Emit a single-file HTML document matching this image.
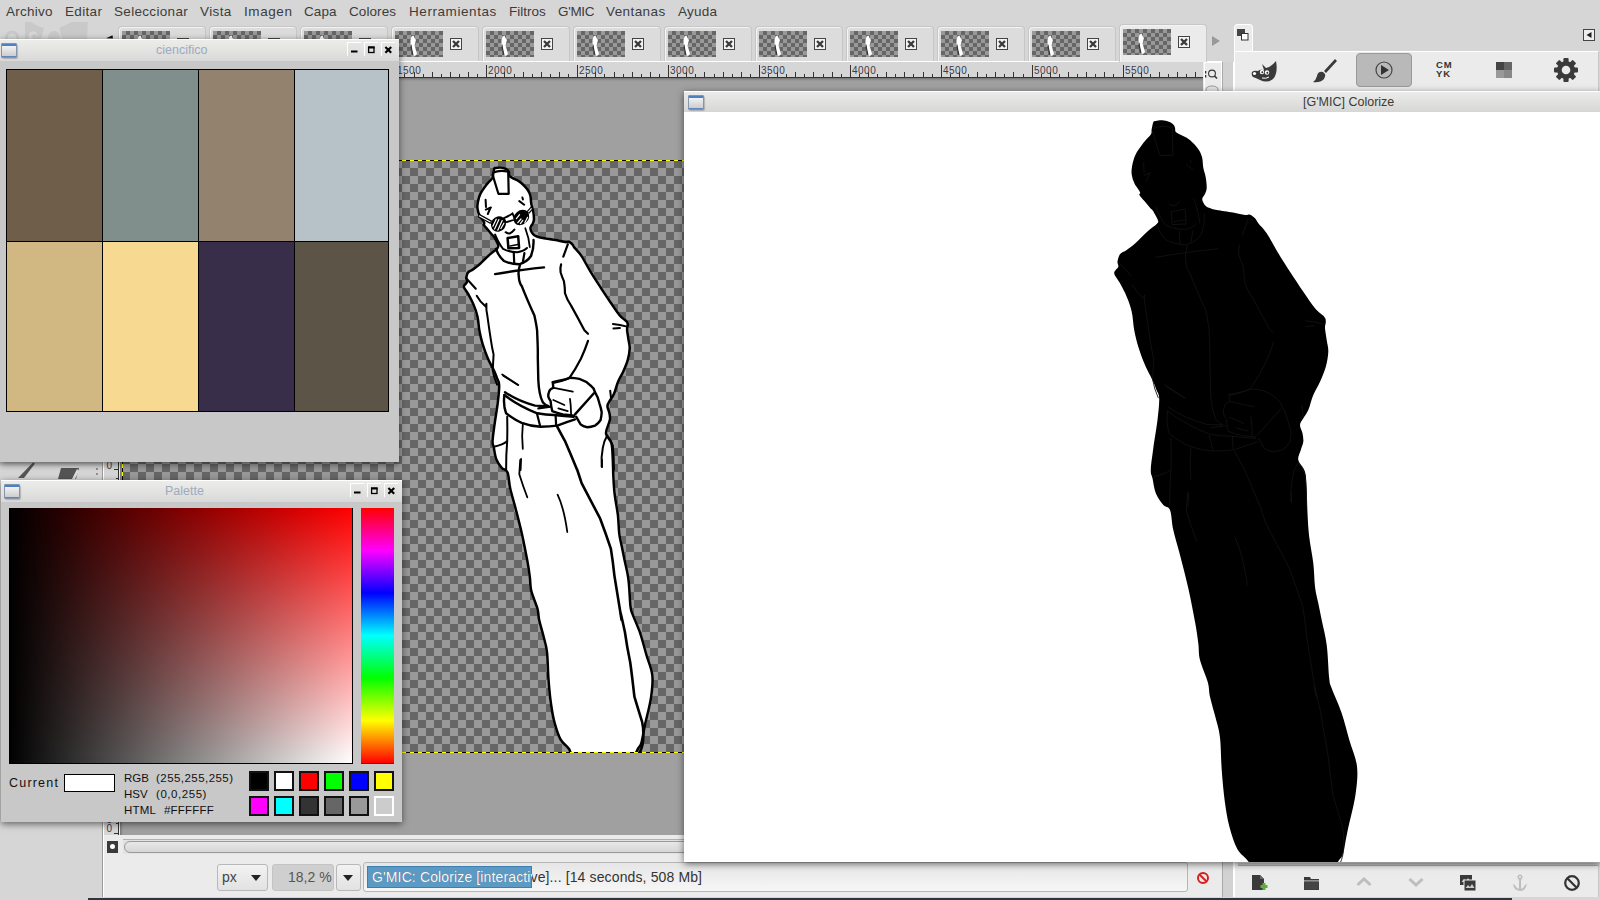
<!DOCTYPE html>
<html><head><meta charset="utf-8">
<style>
*{margin:0;padding:0;box-sizing:border-box}
html,body{width:1600px;height:900px;overflow:hidden;background:#d6d6d6;font-family:"Liberation Sans",sans-serif;position:relative}
.a{position:absolute}
.menu{left:0;top:0;width:1600px;height:23px;background:#d6d6d6}
.menu span{position:absolute;top:4px;font-size:13.5px;color:#3c3c3c}
.tab{position:absolute;width:88px;border:1px solid #c6c6c6;border-bottom:none;border-radius:4px 4px 0 0;box-shadow:inset 1px 1px 0 #f4f4f4}
.tab .th{position:absolute;left:3px;width:48px;height:26px;background:conic-gradient(#666 90deg,#999 90deg 180deg,#666 180deg 270deg,#999 270deg) 0 0/8px 8px}
.tab .th svg{position:absolute;left:0;top:0}
.tab .cx{position:absolute;left:58px;width:12px;height:12px;border:1px solid #444;background:#f4f4f4}
.tab .cx svg{position:absolute;left:0;top:0}
.checker{background:conic-gradient(#666 90deg,#999 90deg 180deg,#666 180deg 270deg,#999 270deg) 0 0/16px 16px}
.win{position:absolute;background:#c8c8c8;box-shadow:0 2px 7px rgba(0,0,0,.55)}
.tbar{position:absolute;left:0;top:0;right:0;height:22px;background:linear-gradient(#ececea,#e4e4e2 45%,#d8d8d8);border-top:1px solid #fff}
.ticon{position:absolute;left:1px;top:3px;width:16px;height:15px;border-radius:2px;background:linear-gradient(#4b7fc6 0,#4b7fc6 3px,#f2f2f2 3px,#cdcdcd 13px,#5f86c0 13px);box-shadow:0 0 0 1px #8394ad inset,1px 1px 1px rgba(0,0,0,.2)}
.ttl{position:absolute;top:3px;font-size:12.5px;color:#9eaac0}
.tbtn{position:absolute;top:2px;width:14px;height:14px;border-left:1px solid #fff;border-top:1px solid #fff;background:linear-gradient(#e6e6e4,#dcdcdc)}
.tbtn svg{position:absolute;left:0;top:0}
.mono{font-family:"Liberation Sans",sans-serif}
</style></head><body>
<!-- menu -->
<div class="a menu">
<span style="left:6px;letter-spacing:0.25px">Archivo</span><span style="left:65px;letter-spacing:0.34px">Editar</span><span style="left:114px;letter-spacing:0.32px">Seleccionar</span><span style="left:200px;letter-spacing:0.38px">Vista</span><span style="left:244px;letter-spacing:0.59px">Imagen</span><span style="left:304px;letter-spacing:0.07px">Capa</span><span style="left:349px;letter-spacing:0.08px">Colores</span><span style="left:409px;letter-spacing:0.57px">Herramientas</span><span style="left:509px;letter-spacing:0px">Filtros</span><span style="left:558px;letter-spacing:-0.35px">G'MIC</span><span style="left:606px;letter-spacing:0.41px">Ventanas</span><span style="left:678px;letter-spacing:0.24px">Ayuda</span>
</div>
<!-- ghost wilber -->
<svg class="a" style="left:0;top:18px" width="100" height="21"><g fill="#c9c9c9"><path d="M25 4L31 4Q36 8 44 9.7L41 21L25 21Z"/><path d="M59.3 9.7Q66 7 72 4L87.8 4L87 21L62 21Z"/><circle cx="12" cy="19.5" r="7"/><circle cx="33" cy="17.6" r="7.2"/><circle cx="54" cy="19" r="6"/></g><g fill="#d7d7d7"><circle cx="12" cy="19.8" r="4.2"/><circle cx="33" cy="17.8" r="4.6"/></g><g fill="#c9c9c9"><circle cx="34.5" cy="18.5" r="2.6"/><circle cx="54.2" cy="19.5" r="3.6"/></g></svg>
<svg class="a" style="left:104px;top:33px" width="12" height="8"><path d="M8.5 2.3L2 5.3L9 5.6Z" fill="#111"/></svg>

<!-- image window frame -->
<div class="a" style="left:102px;top:61px;width:1120px;height:836px;background:#ebebeb;border-left:1px solid #9a9a9a"></div>
<div class="a" style="left:103px;top:61px;width:1px;height:836px;background:#fff"></div>
<div class="a" style="left:102px;top:61px;width:1120px;height:1px;background:#fff"></div>
<!-- tabs -->
<div class="tab" style="left:118px;top:26px;height:35px;background:#dcdcdc"><div class="th" style="top:4px"><svg width="48" height="26"><path d="M16.5 5.5L18.5 4.5L19.5 7L21 9L20.5 13L19.5 14L22 23L20 25L18 24L16.5 16L15.5 12L15.5 9Z" fill="#fff"/><path d="M16.5 13L17 17L18.5 24L17.5 24L15.5 16Z" fill="#111" opacity=".8"/><path d="M20.5 9L21 13L20 14Z" fill="#222" opacity=".6"/></svg></div><div class="cx" style="top:11px"><svg width="10" height="10"><path d="M2 2L8 8M8 2L2 8" stroke="#3a3a3a" stroke-width="2.4"/></svg></div></div>
<div class="tab" style="left:209px;top:26px;height:35px;background:#dcdcdc"><div class="th" style="top:4px"><svg width="48" height="26"><path d="M16.5 5.5L18.5 4.5L19.5 7L21 9L20.5 13L19.5 14L22 23L20 25L18 24L16.5 16L15.5 12L15.5 9Z" fill="#fff"/><path d="M16.5 13L17 17L18.5 24L17.5 24L15.5 16Z" fill="#111" opacity=".8"/><path d="M20.5 9L21 13L20 14Z" fill="#222" opacity=".6"/></svg></div><div class="cx" style="top:11px"><svg width="10" height="10"><path d="M2 2L8 8M8 2L2 8" stroke="#3a3a3a" stroke-width="2.4"/></svg></div></div>
<div class="tab" style="left:300px;top:26px;height:35px;background:#dcdcdc"><div class="th" style="top:4px"><svg width="48" height="26"><path d="M16.5 5.5L18.5 4.5L19.5 7L21 9L20.5 13L19.5 14L22 23L20 25L18 24L16.5 16L15.5 12L15.5 9Z" fill="#fff"/><path d="M16.5 13L17 17L18.5 24L17.5 24L15.5 16Z" fill="#111" opacity=".8"/><path d="M20.5 9L21 13L20 14Z" fill="#222" opacity=".6"/></svg></div><div class="cx" style="top:11px"><svg width="10" height="10"><path d="M2 2L8 8M8 2L2 8" stroke="#3a3a3a" stroke-width="2.4"/></svg></div></div>
<div class="tab" style="left:391px;top:26px;height:35px;background:#dcdcdc"><div class="th" style="top:4px"><svg width="48" height="26"><path d="M16.5 5.5L18.5 4.5L19.5 7L21 9L20.5 13L19.5 14L22 23L20 25L18 24L16.5 16L15.5 12L15.5 9Z" fill="#fff"/><path d="M16.5 13L17 17L18.5 24L17.5 24L15.5 16Z" fill="#111" opacity=".8"/><path d="M20.5 9L21 13L20 14Z" fill="#222" opacity=".6"/></svg></div><div class="cx" style="top:11px"><svg width="10" height="10"><path d="M2 2L8 8M8 2L2 8" stroke="#3a3a3a" stroke-width="2.4"/></svg></div></div>
<div class="tab" style="left:482px;top:26px;height:35px;background:#dcdcdc"><div class="th" style="top:4px"><svg width="48" height="26"><path d="M16.5 5.5L18.5 4.5L19.5 7L21 9L20.5 13L19.5 14L22 23L20 25L18 24L16.5 16L15.5 12L15.5 9Z" fill="#fff"/><path d="M16.5 13L17 17L18.5 24L17.5 24L15.5 16Z" fill="#111" opacity=".8"/><path d="M20.5 9L21 13L20 14Z" fill="#222" opacity=".6"/></svg></div><div class="cx" style="top:11px"><svg width="10" height="10"><path d="M2 2L8 8M8 2L2 8" stroke="#3a3a3a" stroke-width="2.4"/></svg></div></div>
<div class="tab" style="left:573px;top:26px;height:35px;background:#dcdcdc"><div class="th" style="top:4px"><svg width="48" height="26"><path d="M16.5 5.5L18.5 4.5L19.5 7L21 9L20.5 13L19.5 14L22 23L20 25L18 24L16.5 16L15.5 12L15.5 9Z" fill="#fff"/><path d="M16.5 13L17 17L18.5 24L17.5 24L15.5 16Z" fill="#111" opacity=".8"/><path d="M20.5 9L21 13L20 14Z" fill="#222" opacity=".6"/></svg></div><div class="cx" style="top:11px"><svg width="10" height="10"><path d="M2 2L8 8M8 2L2 8" stroke="#3a3a3a" stroke-width="2.4"/></svg></div></div>
<div class="tab" style="left:664px;top:26px;height:35px;background:#dcdcdc"><div class="th" style="top:4px"><svg width="48" height="26"><path d="M16.5 5.5L18.5 4.5L19.5 7L21 9L20.5 13L19.5 14L22 23L20 25L18 24L16.5 16L15.5 12L15.5 9Z" fill="#fff"/><path d="M16.5 13L17 17L18.5 24L17.5 24L15.5 16Z" fill="#111" opacity=".8"/><path d="M20.5 9L21 13L20 14Z" fill="#222" opacity=".6"/></svg></div><div class="cx" style="top:11px"><svg width="10" height="10"><path d="M2 2L8 8M8 2L2 8" stroke="#3a3a3a" stroke-width="2.4"/></svg></div></div>
<div class="tab" style="left:755px;top:26px;height:35px;background:#dcdcdc"><div class="th" style="top:4px"><svg width="48" height="26"><path d="M16.5 5.5L18.5 4.5L19.5 7L21 9L20.5 13L19.5 14L22 23L20 25L18 24L16.5 16L15.5 12L15.5 9Z" fill="#fff"/><path d="M16.5 13L17 17L18.5 24L17.5 24L15.5 16Z" fill="#111" opacity=".8"/><path d="M20.5 9L21 13L20 14Z" fill="#222" opacity=".6"/></svg></div><div class="cx" style="top:11px"><svg width="10" height="10"><path d="M2 2L8 8M8 2L2 8" stroke="#3a3a3a" stroke-width="2.4"/></svg></div></div>
<div class="tab" style="left:846px;top:26px;height:35px;background:#dcdcdc"><div class="th" style="top:4px"><svg width="48" height="26"><path d="M16.5 5.5L18.5 4.5L19.5 7L21 9L20.5 13L19.5 14L22 23L20 25L18 24L16.5 16L15.5 12L15.5 9Z" fill="#fff"/><path d="M16.5 13L17 17L18.5 24L17.5 24L15.5 16Z" fill="#111" opacity=".8"/><path d="M20.5 9L21 13L20 14Z" fill="#222" opacity=".6"/></svg></div><div class="cx" style="top:11px"><svg width="10" height="10"><path d="M2 2L8 8M8 2L2 8" stroke="#3a3a3a" stroke-width="2.4"/></svg></div></div>
<div class="tab" style="left:937px;top:26px;height:35px;background:#dcdcdc"><div class="th" style="top:4px"><svg width="48" height="26"><path d="M16.5 5.5L18.5 4.5L19.5 7L21 9L20.5 13L19.5 14L22 23L20 25L18 24L16.5 16L15.5 12L15.5 9Z" fill="#fff"/><path d="M16.5 13L17 17L18.5 24L17.5 24L15.5 16Z" fill="#111" opacity=".8"/><path d="M20.5 9L21 13L20 14Z" fill="#222" opacity=".6"/></svg></div><div class="cx" style="top:11px"><svg width="10" height="10"><path d="M2 2L8 8M8 2L2 8" stroke="#3a3a3a" stroke-width="2.4"/></svg></div></div>
<div class="tab" style="left:1028px;top:26px;height:35px;background:#dcdcdc"><div class="th" style="top:4px"><svg width="48" height="26"><path d="M16.5 5.5L18.5 4.5L19.5 7L21 9L20.5 13L19.5 14L22 23L20 25L18 24L16.5 16L15.5 12L15.5 9Z" fill="#fff"/><path d="M16.5 13L17 17L18.5 24L17.5 24L15.5 16Z" fill="#111" opacity=".8"/><path d="M20.5 9L21 13L20 14Z" fill="#222" opacity=".6"/></svg></div><div class="cx" style="top:11px"><svg width="10" height="10"><path d="M2 2L8 8M8 2L2 8" stroke="#3a3a3a" stroke-width="2.4"/></svg></div></div>
<div class="tab" style="left:1119px;top:24px;height:38px;background:#ebebeb"><div class="th" style="top:4px"><svg width="48" height="26"><path d="M16.5 5.5L18.5 4.5L19.5 7L21 9L20.5 13L19.5 14L22 23L20 25L18 24L16.5 16L15.5 12L15.5 9Z" fill="#fff"/><path d="M16.5 13L17 17L18.5 24L17.5 24L15.5 16Z" fill="#111" opacity=".8"/><path d="M20.5 9L21 13L20 14Z" fill="#222" opacity=".6"/></svg></div><div class="cx" style="top:11px"><svg width="10" height="10"><path d="M2 2L8 8M8 2L2 8" stroke="#3a3a3a" stroke-width="2.4"/></svg></div></div>
<svg class="a" style="left:1210px;top:34px" width="12" height="14"><path d="M2 2L10 7L2 12Z" fill="#999"/></svg>
<!-- horizontal ruler -->
<div class="a" style="left:120px;top:62px;width:1083px;height:16px;background:#d6d6d6"></div>
<svg class="a" style="left:0;top:0" width="1210" height="80"><g fill="#333"><rect x="305" y="65" width="1" height="12"/><rect x="314" y="74" width="1" height="3"/><rect x="323" y="72" width="1" height="5"/><rect x="332" y="74" width="1" height="3"/><rect x="341" y="72" width="1" height="5"/><rect x="350" y="74" width="1" height="3"/><rect x="359" y="72" width="1" height="5"/><rect x="368" y="74" width="1" height="3"/><rect x="377" y="72" width="1" height="5"/><rect x="386" y="74" width="1" height="3"/><rect x="395" y="65" width="1" height="12"/><rect x="404" y="74" width="1" height="3"/><rect x="414" y="72" width="1" height="5"/><rect x="423" y="74" width="1" height="3"/><rect x="432" y="72" width="1" height="5"/><rect x="441" y="74" width="1" height="3"/><rect x="450" y="72" width="1" height="5"/><rect x="459" y="74" width="1" height="3"/><rect x="468" y="72" width="1" height="5"/><rect x="477" y="74" width="1" height="3"/><text x="397" y="74">1500</text><rect x="486" y="65" width="1" height="12"/><rect x="495" y="74" width="1" height="3"/><rect x="504" y="72" width="1" height="5"/><rect x="514" y="74" width="1" height="3"/><rect x="523" y="72" width="1" height="5"/><rect x="532" y="74" width="1" height="3"/><rect x="541" y="72" width="1" height="5"/><rect x="550" y="74" width="1" height="3"/><rect x="559" y="72" width="1" height="5"/><rect x="568" y="74" width="1" height="3"/><text x="488" y="74">2000</text><rect x="577" y="65" width="1" height="12"/><rect x="586" y="74" width="1" height="3"/><rect x="595" y="72" width="1" height="5"/><rect x="604" y="74" width="1" height="3"/><rect x="614" y="72" width="1" height="5"/><rect x="623" y="74" width="1" height="3"/><rect x="632" y="72" width="1" height="5"/><rect x="641" y="74" width="1" height="3"/><rect x="650" y="72" width="1" height="5"/><rect x="659" y="74" width="1" height="3"/><text x="579" y="74">2500</text><rect x="668" y="65" width="1" height="12"/><rect x="677" y="74" width="1" height="3"/><rect x="686" y="72" width="1" height="5"/><rect x="695" y="74" width="1" height="3"/><rect x="704" y="72" width="1" height="5"/><rect x="714" y="74" width="1" height="3"/><rect x="723" y="72" width="1" height="5"/><rect x="732" y="74" width="1" height="3"/><rect x="741" y="72" width="1" height="5"/><rect x="750" y="74" width="1" height="3"/><text x="670" y="74">3000</text><rect x="759" y="65" width="1" height="12"/><rect x="768" y="74" width="1" height="3"/><rect x="777" y="72" width="1" height="5"/><rect x="786" y="74" width="1" height="3"/><rect x="795" y="72" width="1" height="5"/><rect x="804" y="74" width="1" height="3"/><rect x="813" y="72" width="1" height="5"/><rect x="823" y="74" width="1" height="3"/><rect x="832" y="72" width="1" height="5"/><rect x="841" y="74" width="1" height="3"/><text x="761" y="74">3500</text><rect x="850" y="65" width="1" height="12"/><rect x="859" y="74" width="1" height="3"/><rect x="868" y="72" width="1" height="5"/><rect x="877" y="74" width="1" height="3"/><rect x="886" y="72" width="1" height="5"/><rect x="895" y="74" width="1" height="3"/><rect x="904" y="72" width="1" height="5"/><rect x="913" y="74" width="1" height="3"/><rect x="923" y="72" width="1" height="5"/><rect x="932" y="74" width="1" height="3"/><text x="852" y="74">4000</text><rect x="941" y="65" width="1" height="12"/><rect x="950" y="74" width="1" height="3"/><rect x="959" y="72" width="1" height="5"/><rect x="968" y="74" width="1" height="3"/><rect x="977" y="72" width="1" height="5"/><rect x="986" y="74" width="1" height="3"/><rect x="995" y="72" width="1" height="5"/><rect x="1004" y="74" width="1" height="3"/><rect x="1013" y="72" width="1" height="5"/><rect x="1023" y="74" width="1" height="3"/><text x="943" y="74">4500</text><rect x="1032" y="65" width="1" height="12"/><rect x="1041" y="74" width="1" height="3"/><rect x="1050" y="72" width="1" height="5"/><rect x="1059" y="74" width="1" height="3"/><rect x="1068" y="72" width="1" height="5"/><rect x="1077" y="74" width="1" height="3"/><rect x="1086" y="72" width="1" height="5"/><rect x="1095" y="74" width="1" height="3"/><rect x="1104" y="72" width="1" height="5"/><rect x="1113" y="74" width="1" height="3"/><text x="1034" y="74">5000</text><rect x="1123" y="65" width="1" height="12"/><rect x="1132" y="74" width="1" height="3"/><rect x="1141" y="72" width="1" height="5"/><rect x="1150" y="74" width="1" height="3"/><rect x="1159" y="72" width="1" height="5"/><rect x="1168" y="74" width="1" height="3"/><rect x="1177" y="72" width="1" height="5"/><rect x="1186" y="74" width="1" height="3"/><rect x="1195" y="72" width="1" height="5"/><text x="1125" y="74">5500</text><text x="1215" y="74">6000</text><rect x="120" y="77" width="1083" height="1"/></g><style>text{font:10px "Liberation Sans",sans-serif;fill:#3a3a4a;letter-spacing:.5px}</style></svg>
<!-- vertical ruler -->
<div class="a" style="left:104px;top:78px;width:15px;height:757px;background:#d6d6d6;border-right:1px solid #333"></div>
<svg class="a" style="left:0;top:0" width="122" height="840"><g fill="#333"><rect x="116" y="78" width="3" height="1"/><rect x="114" y="87" width="5" height="1"/><rect x="116" y="96" width="3" height="1"/><rect x="114" y="105" width="5" height="1"/><rect x="116" y="115" width="3" height="1"/><rect x="114" y="124" width="5" height="1"/><rect x="116" y="133" width="3" height="1"/><rect x="114" y="142" width="5" height="1"/><rect x="116" y="151" width="3" height="1"/><rect x="104" y="160" width="15" height="1"/><rect x="116" y="169" width="3" height="1"/><rect x="114" y="178" width="5" height="1"/><rect x="116" y="187" width="3" height="1"/><rect x="114" y="196" width="5" height="1"/><rect x="116" y="205" width="3" height="1"/><rect x="114" y="215" width="5" height="1"/><rect x="116" y="224" width="3" height="1"/><rect x="114" y="233" width="5" height="1"/><rect x="116" y="242" width="3" height="1"/><text x="106.5" y="169">0</text><rect x="104" y="251" width="15" height="1"/><rect x="116" y="260" width="3" height="1"/><rect x="114" y="269" width="5" height="1"/><rect x="116" y="278" width="3" height="1"/><rect x="114" y="287" width="5" height="1"/><rect x="116" y="296" width="3" height="1"/><rect x="114" y="305" width="5" height="1"/><rect x="116" y="315" width="3" height="1"/><rect x="114" y="324" width="5" height="1"/><rect x="116" y="333" width="3" height="1"/><text x="106.5" y="260">5</text><text x="106.5" y="269">0</text><text x="106.5" y="278">0</text><rect x="104" y="342" width="15" height="1"/><rect x="116" y="351" width="3" height="1"/><rect x="114" y="360" width="5" height="1"/><rect x="116" y="369" width="3" height="1"/><rect x="114" y="378" width="5" height="1"/><rect x="116" y="387" width="3" height="1"/><rect x="114" y="396" width="5" height="1"/><rect x="116" y="405" width="3" height="1"/><rect x="114" y="414" width="5" height="1"/><rect x="116" y="424" width="3" height="1"/><text x="106.5" y="351">1</text><text x="106.5" y="360">0</text><text x="106.5" y="369">0</text><text x="106.5" y="378">0</text><rect x="104" y="433" width="15" height="1"/><rect x="116" y="442" width="3" height="1"/><rect x="114" y="451" width="5" height="1"/><rect x="116" y="460" width="3" height="1"/><rect x="114" y="469" width="5" height="1"/><rect x="116" y="478" width="3" height="1"/><rect x="114" y="487" width="5" height="1"/><rect x="116" y="496" width="3" height="1"/><rect x="114" y="505" width="5" height="1"/><rect x="116" y="514" width="3" height="1"/><text x="106.5" y="442">1</text><text x="106.5" y="451">5</text><text x="106.5" y="460">0</text><text x="106.5" y="469">0</text><rect x="104" y="524" width="15" height="1"/><rect x="116" y="533" width="3" height="1"/><rect x="114" y="542" width="5" height="1"/><rect x="116" y="551" width="3" height="1"/><rect x="114" y="560" width="5" height="1"/><rect x="116" y="569" width="3" height="1"/><rect x="114" y="578" width="5" height="1"/><rect x="116" y="587" width="3" height="1"/><rect x="114" y="596" width="5" height="1"/><rect x="116" y="605" width="3" height="1"/><text x="106.5" y="533">2</text><text x="106.5" y="542">0</text><text x="106.5" y="551">0</text><text x="106.5" y="560">0</text><rect x="104" y="614" width="15" height="1"/><rect x="116" y="624" width="3" height="1"/><rect x="114" y="633" width="5" height="1"/><rect x="116" y="642" width="3" height="1"/><rect x="114" y="651" width="5" height="1"/><rect x="116" y="660" width="3" height="1"/><rect x="114" y="669" width="5" height="1"/><rect x="116" y="678" width="3" height="1"/><rect x="114" y="687" width="5" height="1"/><rect x="116" y="696" width="3" height="1"/><text x="106.5" y="623">2</text><text x="106.5" y="632">5</text><text x="106.5" y="641">0</text><text x="106.5" y="650">0</text><rect x="104" y="705" width="15" height="1"/><rect x="116" y="714" width="3" height="1"/><rect x="114" y="724" width="5" height="1"/><rect x="116" y="733" width="3" height="1"/><rect x="114" y="742" width="5" height="1"/><rect x="116" y="751" width="3" height="1"/><rect x="114" y="760" width="5" height="1"/><rect x="116" y="769" width="3" height="1"/><rect x="114" y="778" width="5" height="1"/><rect x="116" y="787" width="3" height="1"/><text x="106.5" y="714">3</text><text x="106.5" y="723">0</text><text x="106.5" y="732">0</text><text x="106.5" y="741">0</text><rect x="104" y="796" width="15" height="1"/><rect x="116" y="805" width="3" height="1"/><rect x="114" y="814" width="5" height="1"/><rect x="116" y="823" width="3" height="1"/><rect x="114" y="833" width="5" height="1"/><text x="106.5" y="805">3</text><text x="106.5" y="814">5</text><text x="106.5" y="823">0</text><text x="106.5" y="832">0</text><text x="106.5" y="896">4</text><text x="106.5" y="905">0</text><text x="106.5" y="914">0</text><text x="106.5" y="923">0</text></g><style>text{font:10px "Liberation Sans",sans-serif;fill:#3a3a4a}</style></svg>
<!-- canvas -->
<div class="a" style="left:120px;top:78px;width:1083px;height:757px;background:#a0a0a0;box-shadow:inset 3px 3px 3px -2px rgba(0,0,0,.35)"></div>
<div class="a checker" style="left:122px;top:160px;width:1081px;height:592px"></div>
<svg class="a" style="left:0;top:0" width="1210" height="840"><defs><clipPath id="lc"><path d="M1155.6 120.9C1157.1 120.6 1160.0 120.1 1162.2 120.2C1164.4 120.3 1167.1 121.0 1168.9 121.7C1170.8 122.4 1172.3 123.4 1173.3 124.4C1174.3 125.4 1174.6 126.6 1175.0 127.8C1175.4 129.0 1174.9 130.7 1175.6 131.7C1176.2 132.7 1177.1 132.9 1178.9 133.9C1180.8 134.9 1184.3 136.2 1186.7 137.8C1189.1 139.4 1191.3 141.3 1193.3 143.3C1195.3 145.3 1197.4 147.6 1198.9 150.0C1200.4 152.4 1201.5 154.8 1202.2 157.8C1202.9 160.8 1202.7 164.7 1203.3 167.8C1203.9 171.0 1205.0 173.4 1205.6 176.7C1206.2 180.0 1206.8 184.9 1206.7 187.8C1206.6 190.7 1205.8 192.1 1205.0 193.9C1204.2 195.8 1202.3 197.2 1202.2 198.9C1202.1 200.7 1203.3 202.9 1204.4 204.4C1205.5 205.9 1206.9 206.9 1208.9 207.8C1211.0 208.7 1212.7 209.2 1216.7 210.0C1220.7 210.8 1228.3 211.7 1233.0 212.5C1237.7 213.3 1242.2 214.6 1245.0 215.0C1247.8 215.4 1248.3 214.1 1250.0 214.7C1251.7 215.2 1253.6 216.9 1255.0 218.3C1256.4 219.7 1256.3 220.8 1258.3 223.3C1260.2 225.8 1263.4 228.3 1266.7 233.3C1270.0 238.3 1274.4 246.9 1278.3 253.3C1282.2 259.7 1285.8 265.3 1290.0 271.7C1294.2 278.1 1299.1 285.6 1303.3 291.7C1307.5 297.8 1311.5 304.1 1315.0 308.3C1318.5 312.5 1322.4 314.5 1324.2 316.7C1326.0 318.9 1325.7 319.8 1325.8 321.7C1325.9 323.6 1324.8 325.2 1325.0 328.3C1325.2 331.4 1326.2 336.1 1326.7 340.0C1327.2 343.9 1328.5 347.2 1328.3 351.7C1328.1 356.1 1327.2 361.7 1325.8 366.7C1324.4 371.7 1322.1 377.0 1320.0 381.7C1317.9 386.4 1315.2 390.3 1313.3 395.0C1311.3 399.7 1310.0 406.1 1308.3 410.0C1306.6 413.9 1304.7 415.8 1303.3 418.3C1301.9 420.8 1300.1 422.5 1300.0 425.0C1299.9 427.5 1302.0 430.5 1302.5 433.3C1303.0 436.1 1303.6 438.9 1303.3 441.7C1303.0 444.5 1301.6 446.9 1300.8 450.0C1300.0 453.1 1297.6 456.4 1298.3 460.0C1299.0 463.6 1303.6 466.7 1305.0 471.7C1306.4 476.7 1306.3 483.1 1306.7 490.0C1307.1 496.9 1307.1 505.5 1307.5 513.3C1307.9 521.1 1308.2 528.4 1309.2 536.7C1310.2 545.0 1312.3 555.0 1313.3 563.3C1314.3 571.6 1314.2 580.0 1315.0 586.7C1315.8 593.4 1317.2 597.8 1318.3 603.3C1319.4 608.8 1320.3 613.0 1321.7 620.0C1323.1 627.0 1325.5 635.3 1326.7 645.0C1328.0 654.7 1328.4 671.1 1329.2 678.3C1330.0 685.5 1329.6 682.5 1331.7 688.3C1333.8 694.1 1338.8 704.7 1341.7 713.3C1344.6 721.9 1346.8 731.1 1349.3 740.0C1351.8 748.9 1356.0 757.3 1357.0 766.4C1358.0 775.5 1357.0 783.8 1355.5 794.4C1354.0 805.0 1349.8 820.4 1347.7 830.2C1345.6 840.1 1344.5 848.3 1343.0 853.5C1341.5 858.7 1339.9 858.2 1338.4 861.3C1336.9 864.4 1334.9 868.0 1334.0 872.0C1333.1 876.0 1346.7 882.8 1333.0 885.0C1319.3 887.2 1265.7 887.2 1252.0 885.0C1238.3 882.8 1251.6 876.0 1251.0 872.0C1250.4 868.0 1250.5 865.1 1248.2 861.3C1245.9 857.4 1240.4 854.6 1237.3 848.9C1234.2 843.2 1231.6 834.8 1229.5 827.0C1227.4 819.2 1226.2 811.5 1224.9 802.2C1223.6 792.9 1222.6 781.8 1221.8 771.1C1221.0 760.4 1221.0 746.7 1220.0 737.8C1219.0 728.9 1217.3 724.6 1215.6 717.8C1213.9 710.9 1211.3 702.6 1210.0 696.7C1208.7 690.8 1209.5 688.3 1207.8 682.2C1206.1 676.1 1201.6 666.5 1200.0 660.0C1198.4 653.5 1199.1 649.7 1198.3 643.3C1197.5 636.9 1196.7 630.9 1195.0 621.7C1193.3 612.5 1190.8 599.4 1188.3 588.3C1185.8 577.2 1182.5 564.7 1180.0 555.0C1177.5 545.3 1175.0 537.5 1173.3 530.0C1171.6 522.5 1171.7 514.2 1170.0 510.0C1168.3 505.8 1165.7 507.8 1163.3 505.0C1160.9 502.2 1157.6 497.8 1155.8 493.3C1154.0 488.9 1153.3 482.2 1152.5 478.3C1151.7 474.4 1150.7 475.0 1150.8 470.0C1150.9 465.0 1152.2 456.6 1153.3 448.3C1154.4 440.0 1156.5 428.3 1157.5 420.0C1158.5 411.7 1159.4 403.3 1159.2 398.3C1159.0 393.3 1157.5 392.8 1156.5 390.0C1155.5 387.2 1155.2 385.9 1153.3 381.7C1151.4 377.5 1147.5 370.8 1145.0 365.0C1142.5 359.2 1140.1 352.5 1138.3 346.7C1136.5 340.9 1135.3 335.8 1134.2 330.0C1133.1 324.2 1133.0 317.2 1131.7 311.7C1130.5 306.1 1128.7 301.4 1126.7 296.7C1124.8 292.0 1122.1 287.2 1120.0 283.3C1117.9 279.4 1114.5 276.1 1114.2 273.3C1113.9 270.5 1117.8 268.6 1118.3 266.7C1118.8 264.8 1117.2 263.8 1117.5 261.7C1117.8 259.6 1118.5 256.1 1120.0 254.2C1121.5 252.2 1124.1 251.9 1126.7 250.0C1129.3 248.1 1132.0 246.2 1135.6 243.0C1139.1 239.8 1144.4 234.2 1148.0 231.0C1151.6 227.8 1155.4 225.6 1157.0 223.8C1158.6 222.0 1158.5 222.1 1157.8 220.0C1157.1 217.9 1154.3 213.0 1153.0 211.0C1151.7 209.0 1151.4 209.5 1150.0 207.8C1148.6 206.2 1146.2 203.2 1144.4 201.1C1142.6 199.0 1140.1 196.5 1139.4 195.0C1138.7 193.5 1140.8 194.1 1140.0 192.2C1139.2 190.2 1135.8 186.3 1134.4 183.3C1133.0 180.3 1132.1 177.4 1131.7 174.4C1131.3 171.4 1131.6 168.9 1132.2 165.6C1132.8 162.3 1133.9 157.9 1135.6 154.4C1137.3 150.9 1140.3 147.0 1142.2 144.4C1144.1 141.8 1145.2 140.7 1146.7 138.9C1148.2 137.2 1150.3 135.6 1151.1 133.9C1151.9 132.2 1151.3 130.8 1151.7 128.9C1152.1 127.0 1152.7 123.5 1153.3 122.2C1153.9 120.9 1154.1 121.2 1155.6 120.9Z"/></clipPath>
<pattern id="dash" x="402" y="0" width="8" height="1" patternUnits="userSpaceOnUse"><rect width="4" height="1" fill="#ff0"/><rect x="4" width="4" height="1" fill="#000"/></pattern>
<pattern id="vdash" x="0" y="0" width="1" height="8" patternUnits="userSpaceOnUse"><rect width="1" height="4" fill="#ff0"/><rect y="4" width="1" height="4" fill="#000"/></pattern></defs>
<clipPath id="imgc"><rect x="122" y="160" width="1081" height="592"/></clipPath><g clip-path="url(#imgc)"><path d="M1155.6 120.9C1157.1 120.6 1160.0 120.1 1162.2 120.2C1164.4 120.3 1167.1 121.0 1168.9 121.7C1170.8 122.4 1172.3 123.4 1173.3 124.4C1174.3 125.4 1174.6 126.6 1175.0 127.8C1175.4 129.0 1174.9 130.7 1175.6 131.7C1176.2 132.7 1177.1 132.9 1178.9 133.9C1180.8 134.9 1184.3 136.2 1186.7 137.8C1189.1 139.4 1191.3 141.3 1193.3 143.3C1195.3 145.3 1197.4 147.6 1198.9 150.0C1200.4 152.4 1201.5 154.8 1202.2 157.8C1202.9 160.8 1202.7 164.7 1203.3 167.8C1203.9 171.0 1205.0 173.4 1205.6 176.7C1206.2 180.0 1206.8 184.9 1206.7 187.8C1206.6 190.7 1205.8 192.1 1205.0 193.9C1204.2 195.8 1202.3 197.2 1202.2 198.9C1202.1 200.7 1203.3 202.9 1204.4 204.4C1205.5 205.9 1206.9 206.9 1208.9 207.8C1211.0 208.7 1212.7 209.2 1216.7 210.0C1220.7 210.8 1228.3 211.7 1233.0 212.5C1237.7 213.3 1242.2 214.6 1245.0 215.0C1247.8 215.4 1248.3 214.1 1250.0 214.7C1251.7 215.2 1253.6 216.9 1255.0 218.3C1256.4 219.7 1256.3 220.8 1258.3 223.3C1260.2 225.8 1263.4 228.3 1266.7 233.3C1270.0 238.3 1274.4 246.9 1278.3 253.3C1282.2 259.7 1285.8 265.3 1290.0 271.7C1294.2 278.1 1299.1 285.6 1303.3 291.7C1307.5 297.8 1311.5 304.1 1315.0 308.3C1318.5 312.5 1322.4 314.5 1324.2 316.7C1326.0 318.9 1325.7 319.8 1325.8 321.7C1325.9 323.6 1324.8 325.2 1325.0 328.3C1325.2 331.4 1326.2 336.1 1326.7 340.0C1327.2 343.9 1328.5 347.2 1328.3 351.7C1328.1 356.1 1327.2 361.7 1325.8 366.7C1324.4 371.7 1322.1 377.0 1320.0 381.7C1317.9 386.4 1315.2 390.3 1313.3 395.0C1311.3 399.7 1310.0 406.1 1308.3 410.0C1306.6 413.9 1304.7 415.8 1303.3 418.3C1301.9 420.8 1300.1 422.5 1300.0 425.0C1299.9 427.5 1302.0 430.5 1302.5 433.3C1303.0 436.1 1303.6 438.9 1303.3 441.7C1303.0 444.5 1301.6 446.9 1300.8 450.0C1300.0 453.1 1297.6 456.4 1298.3 460.0C1299.0 463.6 1303.6 466.7 1305.0 471.7C1306.4 476.7 1306.3 483.1 1306.7 490.0C1307.1 496.9 1307.1 505.5 1307.5 513.3C1307.9 521.1 1308.2 528.4 1309.2 536.7C1310.2 545.0 1312.3 555.0 1313.3 563.3C1314.3 571.6 1314.2 580.0 1315.0 586.7C1315.8 593.4 1317.2 597.8 1318.3 603.3C1319.4 608.8 1320.3 613.0 1321.7 620.0C1323.1 627.0 1325.5 635.3 1326.7 645.0C1328.0 654.7 1328.4 671.1 1329.2 678.3C1330.0 685.5 1329.6 682.5 1331.7 688.3C1333.8 694.1 1338.8 704.7 1341.7 713.3C1344.6 721.9 1346.8 731.1 1349.3 740.0C1351.8 748.9 1356.0 757.3 1357.0 766.4C1358.0 775.5 1357.0 783.8 1355.5 794.4C1354.0 805.0 1349.8 820.4 1347.7 830.2C1345.6 840.1 1344.5 848.3 1343.0 853.5C1341.5 858.7 1339.9 858.2 1338.4 861.3C1336.9 864.4 1334.9 868.0 1334.0 872.0C1333.1 876.0 1346.7 882.8 1333.0 885.0C1319.3 887.2 1265.7 887.2 1252.0 885.0C1238.3 882.8 1251.6 876.0 1251.0 872.0C1250.4 868.0 1250.5 865.1 1248.2 861.3C1245.9 857.4 1240.4 854.6 1237.3 848.9C1234.2 843.2 1231.6 834.8 1229.5 827.0C1227.4 819.2 1226.2 811.5 1224.9 802.2C1223.6 792.9 1222.6 781.8 1221.8 771.1C1221.0 760.4 1221.0 746.7 1220.0 737.8C1219.0 728.9 1217.3 724.6 1215.6 717.8C1213.9 710.9 1211.3 702.6 1210.0 696.7C1208.7 690.8 1209.5 688.3 1207.8 682.2C1206.1 676.1 1201.6 666.5 1200.0 660.0C1198.4 653.5 1199.1 649.7 1198.3 643.3C1197.5 636.9 1196.7 630.9 1195.0 621.7C1193.3 612.5 1190.8 599.4 1188.3 588.3C1185.8 577.2 1182.5 564.7 1180.0 555.0C1177.5 545.3 1175.0 537.5 1173.3 530.0C1171.6 522.5 1171.7 514.2 1170.0 510.0C1168.3 505.8 1165.7 507.8 1163.3 505.0C1160.9 502.2 1157.6 497.8 1155.8 493.3C1154.0 488.9 1153.3 482.2 1152.5 478.3C1151.7 474.4 1150.7 475.0 1150.8 470.0C1150.9 465.0 1152.2 456.6 1153.3 448.3C1154.4 440.0 1156.5 428.3 1157.5 420.0C1158.5 411.7 1159.4 403.3 1159.2 398.3C1159.0 393.3 1157.5 392.8 1156.5 390.0C1155.5 387.2 1155.2 385.9 1153.3 381.7C1151.4 377.5 1147.5 370.8 1145.0 365.0C1142.5 359.2 1140.1 352.5 1138.3 346.7C1136.5 340.9 1135.3 335.8 1134.2 330.0C1133.1 324.2 1133.0 317.2 1131.7 311.7C1130.5 306.1 1128.7 301.4 1126.7 296.7C1124.8 292.0 1122.1 287.2 1120.0 283.3C1117.9 279.4 1114.5 276.1 1114.2 273.3C1113.9 270.5 1117.8 268.6 1118.3 266.7C1118.8 264.8 1117.2 263.8 1117.5 261.7C1117.8 259.6 1118.5 256.1 1120.0 254.2C1121.5 252.2 1124.1 251.9 1126.7 250.0C1129.3 248.1 1132.0 246.2 1135.6 243.0C1139.1 239.8 1144.4 234.2 1148.0 231.0C1151.6 227.8 1155.4 225.6 1157.0 223.8C1158.6 222.0 1158.5 222.1 1157.8 220.0C1157.1 217.9 1154.3 213.0 1153.0 211.0C1151.7 209.0 1151.4 209.5 1150.0 207.8C1148.6 206.2 1146.2 203.2 1144.4 201.1C1142.6 199.0 1140.1 196.5 1139.4 195.0C1138.7 193.5 1140.8 194.1 1140.0 192.2C1139.2 190.2 1135.8 186.3 1134.4 183.3C1133.0 180.3 1132.1 177.4 1131.7 174.4C1131.3 171.4 1131.6 168.9 1132.2 165.6C1132.8 162.3 1133.9 157.9 1135.6 154.4C1137.3 150.9 1140.3 147.0 1142.2 144.4C1144.1 141.8 1145.2 140.7 1146.7 138.9C1148.2 137.2 1150.3 135.6 1151.1 133.9C1151.9 132.2 1151.3 130.8 1151.7 128.9C1152.1 127.0 1152.7 123.5 1153.3 122.2C1153.9 120.9 1154.1 121.2 1155.6 120.9Z" transform="matrix(0.7874 0 0 0.7874 -414.9 71.5)" fill="#fff" stroke="#000" stroke-width="6.5" clip-path="url(#lc)"/>
<g fill="none" stroke="#000" stroke-width="2.2" stroke-linecap="round" stroke-linejoin="round">
<path d="M493.3 172.6Q500 169.5 508.2 171.8"/>
<path d="M492.7 175.1L498.4 193.8L508.7 193.8L508.2 172.4"/>
<path d="M485.6 199.8L486 207M485.8 209.6L490.9 207.5M487.8 214L490.4 208M522.4 197.5L522.9 199.5M519.3 201.1L524.2 204.7" stroke-width="2"/>
<path d="M505.6 232.2Q508 233.8 509.6 233.6Q512.5 232 514.4 229.6" stroke-width="2"/>
<path d="M495.1 234.6Q499 244 503.1 248.8Q509 252 517.3 252.3Q524 251 527 248" stroke-width="2"/>
<path d="M525.3 228.3Q529 238 529.8 247" stroke-width="1.8"/>
<path d="M507.6 238.1L518.2 236.3L519.1 247.9L508.4 248.3Z" stroke-width="2.5"/>
<path d="M510 246L518 244.5" stroke-width="1.5"/>
<path d="M496 248.8Q499 257 504 261Q510 264 519.1 264.3Q527 262 531 256Q534 248 533.5 240" stroke-width="2.4"/>
<path d="M513.8 253.2L514.2 263M524.4 253.2L522.7 263" stroke-width="2.2"/>
<path d="M495.1 274.1Q515 270.5 544 267.4" stroke-width="2.4"/>
<path d="M520 264.8Q518 272 518.7 275.4Q519 283 521.8 286.1Q526 297 534.4 315.6Q537.5 330 537.2 333.3Q538 350 537.8 357.8L538.3 380Q539 395 542.8 402.2Q545 405 548 406" stroke-width="2.4"/>
<path d="M466 278L475.8 288.7" stroke-width="2"/>
<path d="M476.7 295.8Q480 302 485.6 306.4L486.4 303.8Q486 310 487.3 315.3Q489 328 490.9 340.2Q492 348 493.6 354.4L492.7 370.4Q494 378 497.1 384.7" stroke-width="2"/>
<path d="M503.3 375.8L517.6 384.7" stroke-width="1.8"/>
<path d="M567.8 244.4L563.3 256.7" stroke-width="2.2"/>
<path d="M561.1 264.4Q560 268 560.6 272.2Q562 277 563.9 281.1Q565 287 565 293.3Q567 300 571.1 305.6Q578 318 584.4 330.2L588 333.8" stroke-width="2.2"/>
<path d="M612.9 324Q620 324.5 627.1 326.7M613.3 328.5L620 328" stroke-width="1.8"/>
<path d="M588 340.9Q585 350 580.9 358.7Q575 370 569.3 378.2Q562 381 554.2 382.7" stroke-width="2.2"/>
<path d="M610.2 390.7L611.2 399.6" stroke-width="2"/>
<path d="M505 392.2Q518 401.1 535 405.6Q541 406 547.2 406.1" stroke-width="2.4"/>
<path d="M504.4 395Q518 405.6 537.2 413.3Q546 415 553.9 415Q565 416 573.9 416.7" stroke-width="2.4"/>
<path d="M504.4 395Q503 405 506.1 413.3Q515 420 521.7 422.8Q530 426 540.6 426.7Q550 426.5 557.2 425.6Q567 422 575 419.4" stroke-width="2.4"/>
<path d="M537.2 414.4L540 425.6M555.6 415L556.1 425M538.3 408.3L550.6 406.7" stroke-width="2.2"/>
<path d="M552.8 382.2Q558 381 562.8 380Q566 379.5 569.4 377.8Q575 378 579.4 378.9Q586 381 590.6 385.6Q594 388 595 392.2Q598 397 599.4 403.3Q601 408 601.7 412.2Q601.5 416 600.6 420Q598 424 595 425.6Q591 427 587.2 427.2Q583 426.5 580.6 424.4Q578 420 576.1 416.7" stroke-width="2.4"/>
<path d="M552.8 382.2Q553 385 553.3 387.8Q550 389 549.4 391.1Q548 394 548.3 396.7Q549 399 550.6 401.1Q551 406 552.2 411.1Q557 413 562.8 414.4Q568 415 573.9 415.6" stroke-width="2.4"/>
<path d="M593.9 393.3L575 414.4" stroke-width="2.4"/>
<path d="M553.9 387.8L572.8 391.7M553.3 400L564.4 405M558.3 408.3L567.8 411.1M570 398.9Q571 406 571.1 414.4" stroke-width="1.8"/>
<path d="M502.2 374.4L518.3 385" stroke-width="1.8"/>
<path d="M522.8 424.4Q521.5 436 522.8 448.9M521.1 458.9L520.6 470" stroke-width="1.8"/>
<path d="M507.2 416.7Q507.5 430 507.2 441.1Q503 445 493.9 446.7M507.2 441.1Q506 455 506.1 470" stroke-width="2"/>
<path d="M557.2 426.7Q561 434 565 441.1Q571 455 577.2 470Q576 466 581.6 483.1Q591 501 600.2 518.7Q606 534 610.9 548.9Q613 562 614.4 575.6L621.6 620Q618 600 624.9 632Q627 647 630.2 662.2Q632 675 634.4 696.7Q639 712 642.2 722.2Q643.5 728 643.3 735Q643.5 745 640 752" stroke-width="2.6"/>
<path d="M607.2 435.6Q604 441 602.8 447.8Q601 457 601.7 466.7M607.2 435.6Q611 440 612.8 445.6Q614 458 613.9 470" stroke-width="2"/>
<path d="M520.2 460L519.3 474.2Q523 486 527.3 497.3" stroke-width="1.8"/>
<path d="M557.6 494.7Q564 508 567.3 532" stroke-width="1.8"/>
<path d="M602 460L602 467" stroke-width="1.8"/>
</g>
<path d="M478.4 215.3L491.3 222.4" stroke="#000" stroke-width="3.6" fill="none"/><path d="M479 215.8L490.5 222" stroke="#fff" stroke-width="1.2" fill="none"/>
<path d="M528 212.5L532 208" stroke="#000" stroke-width="3.4" fill="none"/><path d="M528.3 212.2L531.6 208.4" stroke="#fff" stroke-width="1.1" fill="none"/>
<path d="M504 218Q509 216 512.5 213.5L515 219.5Q510 221 505.5 222.5Z" fill="#fff" stroke="#000" stroke-width="1.8"/>
<ellipse cx="498.5" cy="224" rx="8" ry="7.3" transform="rotate(-55 498.5 224)" fill="#000"/>
<ellipse cx="521.3" cy="217.5" rx="8.6" ry="7" transform="rotate(-40 521.3 217.5)" fill="#000"/>
<g stroke="#fff" stroke-width="1.2" fill="none" stroke-linecap="round">
<path d="M492.9 226.2L496.2 219.2M494.6 228.9L498.9 219.5M497.8 230.2L502.2 220.5M500.9 228.5L503.9 223.2"/>
<path d="M516.4 218.7L519.6 214.6M517.8 222.7L521 219M520.4 223.6L522.8 220.4M524.8 222.7L527.5 217.4"/>
</g>
</g>
<rect x="122" y="160" width="1081" height="1" fill="url(#dash)"/><rect x="122" y="752" width="1081" height="1" fill="url(#dash)"/><rect x="122" y="160" width="1" height="593" fill="url(#vdash)"/>
</svg>
<!-- zoom column -->
<div class="a" style="left:1204px;top:62px;width:18px;height:773px;background:#ebebeb;border-left:1px solid #fff;border-top:1px solid #fff;border-right:1px solid #fff"></div>
<svg class="a" style="left:1204px;top:64px" width="18" height="30"><rect x="1" y="7" width="1.3" height="2.5" fill="#333"/><rect x="1" y="11" width="1.3" height="2.5" fill="#333"/><circle cx="8" cy="9.5" r="3.4" fill="none" stroke="#333" stroke-width="1.1"/><path d="M10.5 12L13 14.5" stroke="#333" stroke-width="1.6"/><path d="M2 30L2 26Q2 22 8 22Q14 22 14 26L14 30" fill="#e2e2e2" stroke="#999"/></svg>
<!-- bottom of image window -->
<div class="a" style="left:107px;top:841px;width:11px;height:12px;background:#3a3a3a"></div>
<div class="a" style="left:110px;top:844px;width:5px;height:5px;border-radius:50%;background:#fff"></div>
<div class="a" style="left:123px;top:839px;width:1080px;height:15px;background:#e2e2e2;border-top:1px solid #b0b0b0"></div>
<div class="a" style="left:124px;top:841px;width:1080px;height:12px;border-radius:6px;background:linear-gradient(#e8e8e8,#d6d6d6);border:1px solid #9a9a9a"></div>
<!-- status widgets -->
<div class="a" style="left:217px;top:864px;width:51px;height:27px;border:1px solid #b8b8b8;border-radius:3px;background:linear-gradient(#f2f2f2,#e2e2e2)"></div>
<div class="a" style="left:222px;top:869px;font-size:14px;color:#444">px</div>
<svg class="a" style="left:250px;top:874px" width="12" height="8"><path d="M1 1L11 1L6 7Z" fill="#222"/></svg>
<div class="a" style="left:272px;top:864px;width:62px;height:27px;border:1px solid #c4c4c4;border-radius:3px;background:#cfcfcf"></div>
<div class="a" style="left:288px;top:869px;font-size:14px;color:#555">18,2 %</div>
<div class="a" style="left:336px;top:864px;width:25px;height:27px;border:1px solid #b8b8b8;border-radius:3px;background:linear-gradient(#f2f2f2,#e2e2e2)"></div>
<svg class="a" style="left:342px;top:874px" width="12" height="8"><path d="M1 1L11 1L6 7Z" fill="#222"/></svg>
<div class="a" style="left:363px;top:862px;width:825px;height:30px;border:1px solid #b6b6b6;border-radius:3px;background:linear-gradient(#e6e6e6,#f6f6f6)"></div>
<div class="a" style="left:367px;top:866px;width:165px;height:22px;background:#5b9ac4;border:1px solid #3f7fae"></div>
<div class="a" style="left:372px;top:869px;font-size:14px;color:#333;white-space:nowrap;letter-spacing:.13px">G'MIC: Colorize [interactive]... [14 seconds, 508 Mb]</div>
<div class="a" style="left:367px;top:866px;width:165px;height:22px;overflow:hidden"><div class="a" style="left:5px;top:3px;font-size:14px;color:#fff;white-space:nowrap;letter-spacing:.13px">G'MIC: Colorize [interactive]... [14 seconds, 508 Mb]</div></div>
<svg class="a" style="left:1196px;top:871px" width="14" height="14"><circle cx="7" cy="7" r="5" fill="none" stroke="#d42020" stroke-width="2"/><path d="M3.5 3.5L10.5 10.5" stroke="#d42020" stroke-width="2"/></svg>
<!-- pane separator -->
<div class="a" style="left:1222px;top:62px;width:12px;height:835px;background:#d2d2d2;border-left:1px solid #aaa;border-right:1px solid #fff"></div>
<!-- right dock -->
<div class="a" style="left:1234px;top:24px;width:19px;height:28px;background:#ebebeb;border:1px solid #fff;border-bottom:none;border-radius:4px 4px 0 0"></div>
<svg class="a" style="left:1236px;top:28px" width="14" height="14"><rect x="1" y="1" width="8" height="7" fill="#444"/><rect x="5.5" y="5.5" width="6.5" height="6.5" fill="#fff" stroke="#333"/></svg>
<div class="a" style="left:1583px;top:29px;width:12px;height:12px;border:1px solid #444;background:#eee"></div>
<svg class="a" style="left:1583px;top:29px" width="12" height="12"><path d="M8.5 3L3.5 6L8.5 9Z" fill="#222"/></svg>
<div class="a" style="left:1234px;top:51px;width:365px;height:41px;background:#ebebeb;border-top:1px solid #fff;border-left:1px solid #fff;border-right:1px solid #c8c8c8"></div>
<div class="a" style="left:1356px;top:53px;width:56px;height:34px;background:#b9b9b9;border:1px solid #9a9a9a;border-radius:4px"></div>
<!-- dock icons -->
<svg class="a" style="left:1250px;top:58px" width="30" height="26"><path d="M26 3Q28 14 24 20Q18 26 10 22Q6 20 3 19Q1 17 2 14Q4 12 8 13Q10 11 14 12L12 6L16 10Q20 10 26 3Z" fill="#3a3a3a"/><circle cx="4.5" cy="15.5" r="1.6" fill="#fff"/><circle cx="12" cy="14" r="2.2" fill="#fff"/><circle cx="17" cy="14.5" r="2.2" fill="#fff"/><circle cx="12.3" cy="14.3" r="1" fill="#333"/><circle cx="17.3" cy="14.8" r="1" fill="#333"/><path d="M12 20Q16 21 19 19" stroke="#fff" stroke-width="1" fill="none"/></svg>
<svg class="a" style="left:1310px;top:57px" width="30" height="28"><path d="M25 2L27 4L16 16L14 14Z" fill="#3a3a3a"/><path d="M13 15Q8 14 7 19Q6 23 3 25Q10 26 14 22Q16 19 15 17Z" fill="#3a3a3a"/></svg>
<svg class="a" style="left:1374px;top:60px" width="20" height="20"><circle cx="10" cy="10" r="8" fill="none" stroke="#444" stroke-width="1.2"/><path d="M7 5L15 10L7 15Z" fill="#333"/></svg>
<div class="a" style="left:1436px;top:61px;font-size:9.5px;font-weight:bold;color:#333;line-height:8.5px;letter-spacing:1px">CM<br>YK</div>
<svg class="a" style="left:1496px;top:62px" width="16" height="16"><rect x="0" y="0" width="8" height="8" fill="#444"/><rect x="8" y="0" width="8" height="8" fill="#666"/><rect x="0" y="8" width="8" height="8" fill="#999"/><rect x="8" y="8" width="8" height="8" fill="#888"/></svg>
<svg class="a" style="left:1553px;top:57px" width="26" height="26"><g transform="translate(13 13)"><circle r="9" fill="#3a3a3a"/><g fill="#3a3a3a"><rect x="-2.6" y="-12" width="5.2" height="24" rx="1"/><rect x="-2.6" y="-12" width="5.2" height="24" rx="1" transform="rotate(45)"/><rect x="-2.6" y="-12" width="5.2" height="24" rx="1" transform="rotate(90)"/><rect x="-2.6" y="-12" width="5.2" height="24" rx="1" transform="rotate(135)"/></g><circle r="4.3" fill="#ebebeb"/></g></svg>
<!-- dock bottom -->
<div class="a" style="left:1234px;top:862px;width:365px;height:35px;background:#ebebeb;border-left:1px solid #fff;border-right:1px solid #c8c8c8"></div>
<div class="a" style="left:1238px;top:863px;width:360px;height:3px;background:#c9c9c9;border-bottom:1px solid #aaa"></div>
<svg class="a" style="left:1251px;top:874px" width="18" height="18"><path d="M1 1L9 1L13 5L13 16L1 16Z" fill="#3a3a3a"/><path d="M9 1L9 5L13 5" fill="#666"/><path d="M9.5 12.5L16.5 12.5M13 9L13 16" stroke="#5fae3a" stroke-width="3"/></svg>
<svg class="a" style="left:1303px;top:874px" width="18" height="18"><path d="M1 3L7 3L8 5L16 5L16 16L1 16Z" fill="#3a3a3a"/><path d="M1 7L16 7" stroke="#ebebeb" stroke-width="1"/><rect x="1.5" y="7.5" width="14" height="8" fill="#444"/></svg>
<svg class="a" style="left:1355px;top:875px" width="18" height="14"><path d="M2.5 10L9 4L15.5 10" stroke="#bdbdbd" stroke-width="3" fill="none"/></svg>
<svg class="a" style="left:1407px;top:875px" width="18" height="14"><path d="M2.5 4L9 10L15.5 4" stroke="#bdbdbd" stroke-width="3" fill="none"/></svg>
<svg class="a" style="left:1459px;top:874px" width="18" height="18"><rect x="1" y="1" width="12" height="10" fill="#3a3a3a"/><path d="M2.5 8L5 5L7 7L9 4L11.5 8Z" fill="#ccc"/><rect x="5" y="6" width="12" height="11" fill="#3a3a3a" stroke="#ebebeb" stroke-width="1"/><path d="M6.5 14L9 11L11 13L13 10L15.5 14Z" fill="#ccc"/></svg>
<svg class="a" style="left:1511px;top:874px" width="18" height="18"><circle cx="9" cy="3" r="1.8" fill="none" stroke="#bdbdbd" stroke-width="1.5"/><rect x="8" y="4.5" width="2" height="11" fill="#bdbdbd"/><path d="M2.2 9.5Q2.5 16.5 9 17Q15.5 16.5 15.8 9.5L13.6 11.8Q12.5 14.8 9 15Q5.5 14.8 4.4 11.8Z" fill="#bdbdbd"/></svg>
<svg class="a" style="left:1563px;top:874px" width="18" height="18"><circle cx="9" cy="9" r="6.8" fill="none" stroke="#333" stroke-width="2.2"/><path d="M4.3 4.3L13.7 13.7" stroke="#333" stroke-width="2.2"/></svg>
<div class="a" style="left:88px;top:898px;width:1424px;height:2px;background:#30343e"></div>

<!-- toolbox strip -->
<div class="a" style="left:0;top:462px;width:102px;height:18px;background:linear-gradient(#bdbdbd,#d6d6d6 5px,#d6d6d6)"></div>
<svg class="a" style="left:0;top:462px" width="102" height="18"><path d="M33 0.5L35 1.5L24 16L18 16Z" fill="#555"/><path d="M61 6L79 6L76 17L58 17Z" fill="#555"/><path d="M77 7L79 9L75 17L72 17Z" fill="#ddd"/><circle cx="97" cy="7" r="1" fill="#777"/><circle cx="97" cy="12" r="1" fill="#777"/></svg>

<!-- ciencifico window -->
<div class="win" style="left:0;top:39px;width:399px;height:423px">
 <div class="tbar"><div class="ticon"></div><div class="ttl" style="left:156px">ciencifico</div>
 <div class="tbtn" style="left:347px"><svg width="14" height="15"><rect x="3" y="7.5" width="6.5" height="2" fill="#000"/></svg></div><div class="tbtn" style="left:364px"><svg width="14" height="15"><rect x="3.6" y="4.1" width="5.4" height="5.4" fill="none" stroke="#000" stroke-width="1.3"/><rect x="3" y="3.5" width="6.6" height="2" fill="#000"/></svg></div><div class="tbtn" style="left:381px"><svg width="14" height="15"><path d="M3.4 4L9.2 9.8M9.2 4L3.4 9.8" stroke="#000" stroke-width="2.1"/></svg></div></div>
 <div class="a" style="left:6px;top:30px;width:383px;height:343px;background:#000">
  <div class="a" style="left:1px;top:1px;width:95px;height:171px;background:#6e5e4a"></div>
  <div class="a" style="left:97px;top:1px;width:95px;height:171px;background:#808e8c"></div>
  <div class="a" style="left:193px;top:1px;width:95px;height:171px;background:#93826e"></div>
  <div class="a" style="left:289px;top:1px;width:93px;height:171px;background:#b7c2c8"></div>
  <div class="a" style="left:1px;top:173px;width:95px;height:169px;background:#d1b782"></div>
  <div class="a" style="left:97px;top:173px;width:95px;height:169px;background:#f8d991"></div>
  <div class="a" style="left:193px;top:173px;width:95px;height:169px;background:#382e4a"></div>
  <div class="a" style="left:289px;top:173px;width:93px;height:169px;background:#5c5446"></div>
 </div>
</div>

<!-- palette window -->
<div class="win" style="left:1px;top:480px;width:401px;height:342px">
 <div class="tbar"><div class="ticon" style="left:3px"></div><div class="ttl" style="left:164px">Palette</div>
 <div class="tbtn" style="left:349px"><svg width="14" height="15"><rect x="3" y="7.5" width="6.5" height="2" fill="#000"/></svg></div><div class="tbtn" style="left:366px"><svg width="14" height="15"><rect x="3.6" y="4.1" width="5.4" height="5.4" fill="none" stroke="#000" stroke-width="1.3"/><rect x="3" y="3.5" width="6.6" height="2" fill="#000"/></svg></div><div class="tbtn" style="left:383px"><svg width="14" height="15"><path d="M3.4 4L9.2 9.8M9.2 4L3.4 9.8" stroke="#000" stroke-width="2.1"/></svg></div></div>
 <div class="a" style="left:8px;top:28px;width:344px;height:256px;background:linear-gradient(to right,#000,rgba(0,0,0,0)),linear-gradient(#f00,#fff);border-right:1px solid #000;border-bottom:1px solid #000"></div>
 <div class="a" style="left:360px;top:28px;width:33px;height:256px;background:linear-gradient(#f00,#f0f,#00f,#0ff,#0f0,#ff0,#f00);border-bottom:1px solid #333"></div>
 <div class="a" style="left:8px;top:296px;font-size:12.5px;color:#111;letter-spacing:1.2px">Current</div>
 <div class="a" style="left:63px;top:294px;width:51px;height:18px;background:#fff;border:1px solid #000"></div>
 <div class="a" style="left:123px;top:290px;font-size:11.5px;color:#111;line-height:16px">RGB<br>HSV<br><span style="letter-spacing:.2px">HTML</span></div>
 <div class="a" style="left:155px;top:290px;font-size:11.5px;color:#111;line-height:16px;letter-spacing:.45px">(255,255,255)</div>
 <div class="a" style="left:155px;top:306px;font-size:11.5px;color:#111;line-height:16px;letter-spacing:.55px">(0,0,255)</div>
 <div class="a" style="left:163px;top:322px;font-size:11.5px;color:#111;line-height:16px;letter-spacing:.2px">#FFFFFF</div>
 <div class="a" style="left:248px;top:291px;width:20px;height:20px;background:#000;border:2px solid #111"></div>
 <div class="a" style="left:273px;top:291px;width:20px;height:20px;background:#fff;border:2px solid #111"></div>
 <div class="a" style="left:298px;top:291px;width:20px;height:20px;background:#f00;border:2px solid #111"></div>
 <div class="a" style="left:323px;top:291px;width:20px;height:20px;background:#0f0;border:2px solid #111"></div>
 <div class="a" style="left:348px;top:291px;width:20px;height:20px;background:#00f;border:2px solid #111"></div>
 <div class="a" style="left:373px;top:291px;width:20px;height:20px;background:#ff0;border:2px solid #111"></div>
 <div class="a" style="left:248px;top:316px;width:20px;height:20px;background:#f0f;border:2px solid #111"></div>
 <div class="a" style="left:273px;top:316px;width:20px;height:20px;background:#0ff;border:2px solid #111"></div>
 <div class="a" style="left:298px;top:316px;width:20px;height:20px;background:#333;border:2px solid #111"></div>
 <div class="a" style="left:323px;top:316px;width:20px;height:20px;background:#666;border:2px solid #111"></div>
 <div class="a" style="left:348px;top:316px;width:20px;height:20px;background:#999;border:2px solid #111"></div>
 <div class="a" style="left:373px;top:316px;width:20px;height:20px;background:#ccc;border:2px solid #fff"></div>
</div>

<!-- GMIC window -->
<div class="win" style="left:684px;top:91px;width:916px;height:771px;background:#fff">
 <div class="tbar" style="height:21px;background:linear-gradient(#ebebe9,#e2e2e0 45%,#d6d6d6)"><div class="ticon" style="left:4px"></div><div class="ttl" style="left:619px;color:#3a3a3a">[G'MIC] Colorize</div></div>
 <svg class="a" style="left:0;top:21px" width="916" height="750" viewBox="684 112 916 750"><path d="M1155.6 120.9C1157.1 120.6 1160.0 120.1 1162.2 120.2C1164.4 120.3 1167.1 121.0 1168.9 121.7C1170.8 122.4 1172.3 123.4 1173.3 124.4C1174.3 125.4 1174.6 126.6 1175.0 127.8C1175.4 129.0 1174.9 130.7 1175.6 131.7C1176.2 132.7 1177.1 132.9 1178.9 133.9C1180.8 134.9 1184.3 136.2 1186.7 137.8C1189.1 139.4 1191.3 141.3 1193.3 143.3C1195.3 145.3 1197.4 147.6 1198.9 150.0C1200.4 152.4 1201.5 154.8 1202.2 157.8C1202.9 160.8 1202.7 164.7 1203.3 167.8C1203.9 171.0 1205.0 173.4 1205.6 176.7C1206.2 180.0 1206.8 184.9 1206.7 187.8C1206.6 190.7 1205.8 192.1 1205.0 193.9C1204.2 195.8 1202.3 197.2 1202.2 198.9C1202.1 200.7 1203.3 202.9 1204.4 204.4C1205.5 205.9 1206.9 206.9 1208.9 207.8C1211.0 208.7 1212.7 209.2 1216.7 210.0C1220.7 210.8 1228.3 211.7 1233.0 212.5C1237.7 213.3 1242.2 214.6 1245.0 215.0C1247.8 215.4 1248.3 214.1 1250.0 214.7C1251.7 215.2 1253.6 216.9 1255.0 218.3C1256.4 219.7 1256.3 220.8 1258.3 223.3C1260.2 225.8 1263.4 228.3 1266.7 233.3C1270.0 238.3 1274.4 246.9 1278.3 253.3C1282.2 259.7 1285.8 265.3 1290.0 271.7C1294.2 278.1 1299.1 285.6 1303.3 291.7C1307.5 297.8 1311.5 304.1 1315.0 308.3C1318.5 312.5 1322.4 314.5 1324.2 316.7C1326.0 318.9 1325.7 319.8 1325.8 321.7C1325.9 323.6 1324.8 325.2 1325.0 328.3C1325.2 331.4 1326.2 336.1 1326.7 340.0C1327.2 343.9 1328.5 347.2 1328.3 351.7C1328.1 356.1 1327.2 361.7 1325.8 366.7C1324.4 371.7 1322.1 377.0 1320.0 381.7C1317.9 386.4 1315.2 390.3 1313.3 395.0C1311.3 399.7 1310.0 406.1 1308.3 410.0C1306.6 413.9 1304.7 415.8 1303.3 418.3C1301.9 420.8 1300.1 422.5 1300.0 425.0C1299.9 427.5 1302.0 430.5 1302.5 433.3C1303.0 436.1 1303.6 438.9 1303.3 441.7C1303.0 444.5 1301.6 446.9 1300.8 450.0C1300.0 453.1 1297.6 456.4 1298.3 460.0C1299.0 463.6 1303.6 466.7 1305.0 471.7C1306.4 476.7 1306.3 483.1 1306.7 490.0C1307.1 496.9 1307.1 505.5 1307.5 513.3C1307.9 521.1 1308.2 528.4 1309.2 536.7C1310.2 545.0 1312.3 555.0 1313.3 563.3C1314.3 571.6 1314.2 580.0 1315.0 586.7C1315.8 593.4 1317.2 597.8 1318.3 603.3C1319.4 608.8 1320.3 613.0 1321.7 620.0C1323.1 627.0 1325.5 635.3 1326.7 645.0C1328.0 654.7 1328.4 671.1 1329.2 678.3C1330.0 685.5 1329.6 682.5 1331.7 688.3C1333.8 694.1 1338.8 704.7 1341.7 713.3C1344.6 721.9 1346.8 731.1 1349.3 740.0C1351.8 748.9 1356.0 757.3 1357.0 766.4C1358.0 775.5 1357.0 783.8 1355.5 794.4C1354.0 805.0 1349.8 820.4 1347.7 830.2C1345.6 840.1 1344.5 848.3 1343.0 853.5C1341.5 858.7 1339.9 858.2 1338.4 861.3C1336.9 864.4 1334.9 868.0 1334.0 872.0C1333.1 876.0 1346.7 882.8 1333.0 885.0C1319.3 887.2 1265.7 887.2 1252.0 885.0C1238.3 882.8 1251.6 876.0 1251.0 872.0C1250.4 868.0 1250.5 865.1 1248.2 861.3C1245.9 857.4 1240.4 854.6 1237.3 848.9C1234.2 843.2 1231.6 834.8 1229.5 827.0C1227.4 819.2 1226.2 811.5 1224.9 802.2C1223.6 792.9 1222.6 781.8 1221.8 771.1C1221.0 760.4 1221.0 746.7 1220.0 737.8C1219.0 728.9 1217.3 724.6 1215.6 717.8C1213.9 710.9 1211.3 702.6 1210.0 696.7C1208.7 690.8 1209.5 688.3 1207.8 682.2C1206.1 676.1 1201.6 666.5 1200.0 660.0C1198.4 653.5 1199.1 649.7 1198.3 643.3C1197.5 636.9 1196.7 630.9 1195.0 621.7C1193.3 612.5 1190.8 599.4 1188.3 588.3C1185.8 577.2 1182.5 564.7 1180.0 555.0C1177.5 545.3 1175.0 537.5 1173.3 530.0C1171.6 522.5 1171.7 514.2 1170.0 510.0C1168.3 505.8 1165.7 507.8 1163.3 505.0C1160.9 502.2 1157.6 497.8 1155.8 493.3C1154.0 488.9 1153.3 482.2 1152.5 478.3C1151.7 474.4 1150.7 475.0 1150.8 470.0C1150.9 465.0 1152.2 456.6 1153.3 448.3C1154.4 440.0 1156.5 428.3 1157.5 420.0C1158.5 411.7 1159.4 403.3 1159.2 398.3C1159.0 393.3 1157.5 392.8 1156.5 390.0C1155.5 387.2 1155.2 385.9 1153.3 381.7C1151.4 377.5 1147.5 370.8 1145.0 365.0C1142.5 359.2 1140.1 352.5 1138.3 346.7C1136.5 340.9 1135.3 335.8 1134.2 330.0C1133.1 324.2 1133.0 317.2 1131.7 311.7C1130.5 306.1 1128.7 301.4 1126.7 296.7C1124.8 292.0 1122.1 287.2 1120.0 283.3C1117.9 279.4 1114.5 276.1 1114.2 273.3C1113.9 270.5 1117.8 268.6 1118.3 266.7C1118.8 264.8 1117.2 263.8 1117.5 261.7C1117.8 259.6 1118.5 256.1 1120.0 254.2C1121.5 252.2 1124.1 251.9 1126.7 250.0C1129.3 248.1 1132.0 246.2 1135.6 243.0C1139.1 239.8 1144.4 234.2 1148.0 231.0C1151.6 227.8 1155.4 225.6 1157.0 223.8C1158.6 222.0 1158.5 222.1 1157.8 220.0C1157.1 217.9 1154.3 213.0 1153.0 211.0C1151.7 209.0 1151.4 209.5 1150.0 207.8C1148.6 206.2 1146.2 203.2 1144.4 201.1C1142.6 199.0 1140.1 196.5 1139.4 195.0C1138.7 193.5 1140.8 194.1 1140.0 192.2C1139.2 190.2 1135.8 186.3 1134.4 183.3C1133.0 180.3 1132.1 177.4 1131.7 174.4C1131.3 171.4 1131.6 168.9 1132.2 165.6C1132.8 162.3 1133.9 157.9 1135.6 154.4C1137.3 150.9 1140.3 147.0 1142.2 144.4C1144.1 141.8 1145.2 140.7 1146.7 138.9C1148.2 137.2 1150.3 135.6 1151.1 133.9C1151.9 132.2 1151.3 130.8 1151.7 128.9C1152.1 127.0 1152.7 123.5 1153.3 122.2C1153.9 120.9 1154.1 121.2 1155.6 120.9Z" fill="#000"/><g transform="matrix(1.27 0 0 1.27 526.9 -90.8)"><g vector-effect="non-scaling-stroke" fill="none" stroke="#121212" stroke-width="0.7" stroke-linecap="round" stroke-linejoin="round">
<path d="M493.3 172.6Q500 169.5 508.2 171.8"/>
<path d="M492.7 175.1L498.4 193.8L508.7 193.8L508.2 172.4"/>
<path d="M485.6 199.8L486 207M485.8 209.6L490.9 207.5M487.8 214L490.4 208M522.4 197.5L522.9 199.5M519.3 201.1L524.2 204.7" stroke-width="0.7"/>
<path d="M505.6 232.2Q508 233.8 509.6 233.6Q512.5 232 514.4 229.6" stroke-width="0.7"/>
<path d="M495.1 234.6Q499 244 503.1 248.8Q509 252 517.3 252.3Q524 251 527 248" stroke-width="0.7"/>
<path d="M525.3 228.3Q529 238 529.8 247" stroke-width="0.7"/>
<path d="M507.6 238.1L518.2 236.3L519.1 247.9L508.4 248.3Z" stroke-width="0.7"/>
<path d="M510 246L518 244.5" stroke-width="0.7"/>
<path d="M496 248.8Q499 257 504 261Q510 264 519.1 264.3Q527 262 531 256Q534 248 533.5 240" stroke-width="0.7"/>
<path d="M513.8 253.2L514.2 263M524.4 253.2L522.7 263" stroke-width="0.7"/>
<path d="M495.1 274.1Q515 270.5 544 267.4" stroke-width="0.7"/>
<path d="M520 264.8Q518 272 518.7 275.4Q519 283 521.8 286.1Q526 297 534.4 315.6Q537.5 330 537.2 333.3Q538 350 537.8 357.8L538.3 380Q539 395 542.8 402.2Q545 405 548 406" stroke-width="0.7"/>
<path d="M466 278L475.8 288.7" stroke-width="0.7"/>
<path d="M476.7 295.8Q480 302 485.6 306.4L486.4 303.8Q486 310 487.3 315.3Q489 328 490.9 340.2Q492 348 493.6 354.4L492.7 370.4Q494 378 497.1 384.7" stroke-width="0.7"/>
<path d="M503.3 375.8L517.6 384.7" stroke-width="0.7"/>
<path d="M567.8 244.4L563.3 256.7" stroke-width="0.7"/>
<path d="M561.1 264.4Q560 268 560.6 272.2Q562 277 563.9 281.1Q565 287 565 293.3Q567 300 571.1 305.6Q578 318 584.4 330.2L588 333.8" stroke-width="0.7"/>
<path d="M612.9 324Q620 324.5 627.1 326.7M613.3 328.5L620 328" stroke-width="0.7"/>
<path d="M588 340.9Q585 350 580.9 358.7Q575 370 569.3 378.2Q562 381 554.2 382.7" stroke-width="0.7"/>
<path d="M610.2 390.7L611.2 399.6" stroke-width="0.7"/>
<path d="M505 392.2Q518 401.1 535 405.6Q541 406 547.2 406.1" stroke-width="0.7"/>
<path d="M504.4 395Q518 405.6 537.2 413.3Q546 415 553.9 415Q565 416 573.9 416.7" stroke-width="0.7"/>
<path d="M504.4 395Q503 405 506.1 413.3Q515 420 521.7 422.8Q530 426 540.6 426.7Q550 426.5 557.2 425.6Q567 422 575 419.4" stroke-width="0.7"/>
<path d="M537.2 414.4L540 425.6M555.6 415L556.1 425M538.3 408.3L550.6 406.7" stroke-width="0.7"/>
<path d="M552.8 382.2Q558 381 562.8 380Q566 379.5 569.4 377.8Q575 378 579.4 378.9Q586 381 590.6 385.6Q594 388 595 392.2Q598 397 599.4 403.3Q601 408 601.7 412.2Q601.5 416 600.6 420Q598 424 595 425.6Q591 427 587.2 427.2Q583 426.5 580.6 424.4Q578 420 576.1 416.7" stroke-width="0.7"/>
<path d="M552.8 382.2Q553 385 553.3 387.8Q550 389 549.4 391.1Q548 394 548.3 396.7Q549 399 550.6 401.1Q551 406 552.2 411.1Q557 413 562.8 414.4Q568 415 573.9 415.6" stroke-width="0.7"/>
<path d="M593.9 393.3L575 414.4" stroke-width="0.7"/>
<path d="M553.9 387.8L572.8 391.7M553.3 400L564.4 405M558.3 408.3L567.8 411.1M570 398.9Q571 406 571.1 414.4" stroke-width="0.7"/>
<path d="M502.2 374.4L518.3 385" stroke-width="0.7"/>
<path d="M522.8 424.4Q521.5 436 522.8 448.9M521.1 458.9L520.6 470" stroke-width="0.7"/>
<path d="M507.2 416.7Q507.5 430 507.2 441.1Q503 445 493.9 446.7M507.2 441.1Q506 455 506.1 470" stroke-width="0.7"/>
<path d="M557.2 426.7Q561 434 565 441.1Q571 455 577.2 470Q576 466 581.6 483.1Q591 501 600.2 518.7Q606 534 610.9 548.9Q613 562 614.4 575.6L621.6 620Q618 600 624.9 632Q627 647 630.2 662.2Q632 675 634.4 696.7Q639 712 642.2 722.2Q643.5 728 643.3 735Q643.5 745 640 752" stroke-width="0.7"/>
<path d="M607.2 435.6Q604 441 602.8 447.8Q601 457 601.7 466.7M607.2 435.6Q611 440 612.8 445.6Q614 458 613.9 470" stroke-width="0.7"/>
<path d="M520.2 460L519.3 474.2Q523 486 527.3 497.3" stroke-width="0.7"/>
<path d="M557.6 494.7Q564 508 567.3 532" stroke-width="0.7"/>
<path d="M602 460L602 467" stroke-width="0.7"/>
</g></g></svg>
</div>

</body></html>
